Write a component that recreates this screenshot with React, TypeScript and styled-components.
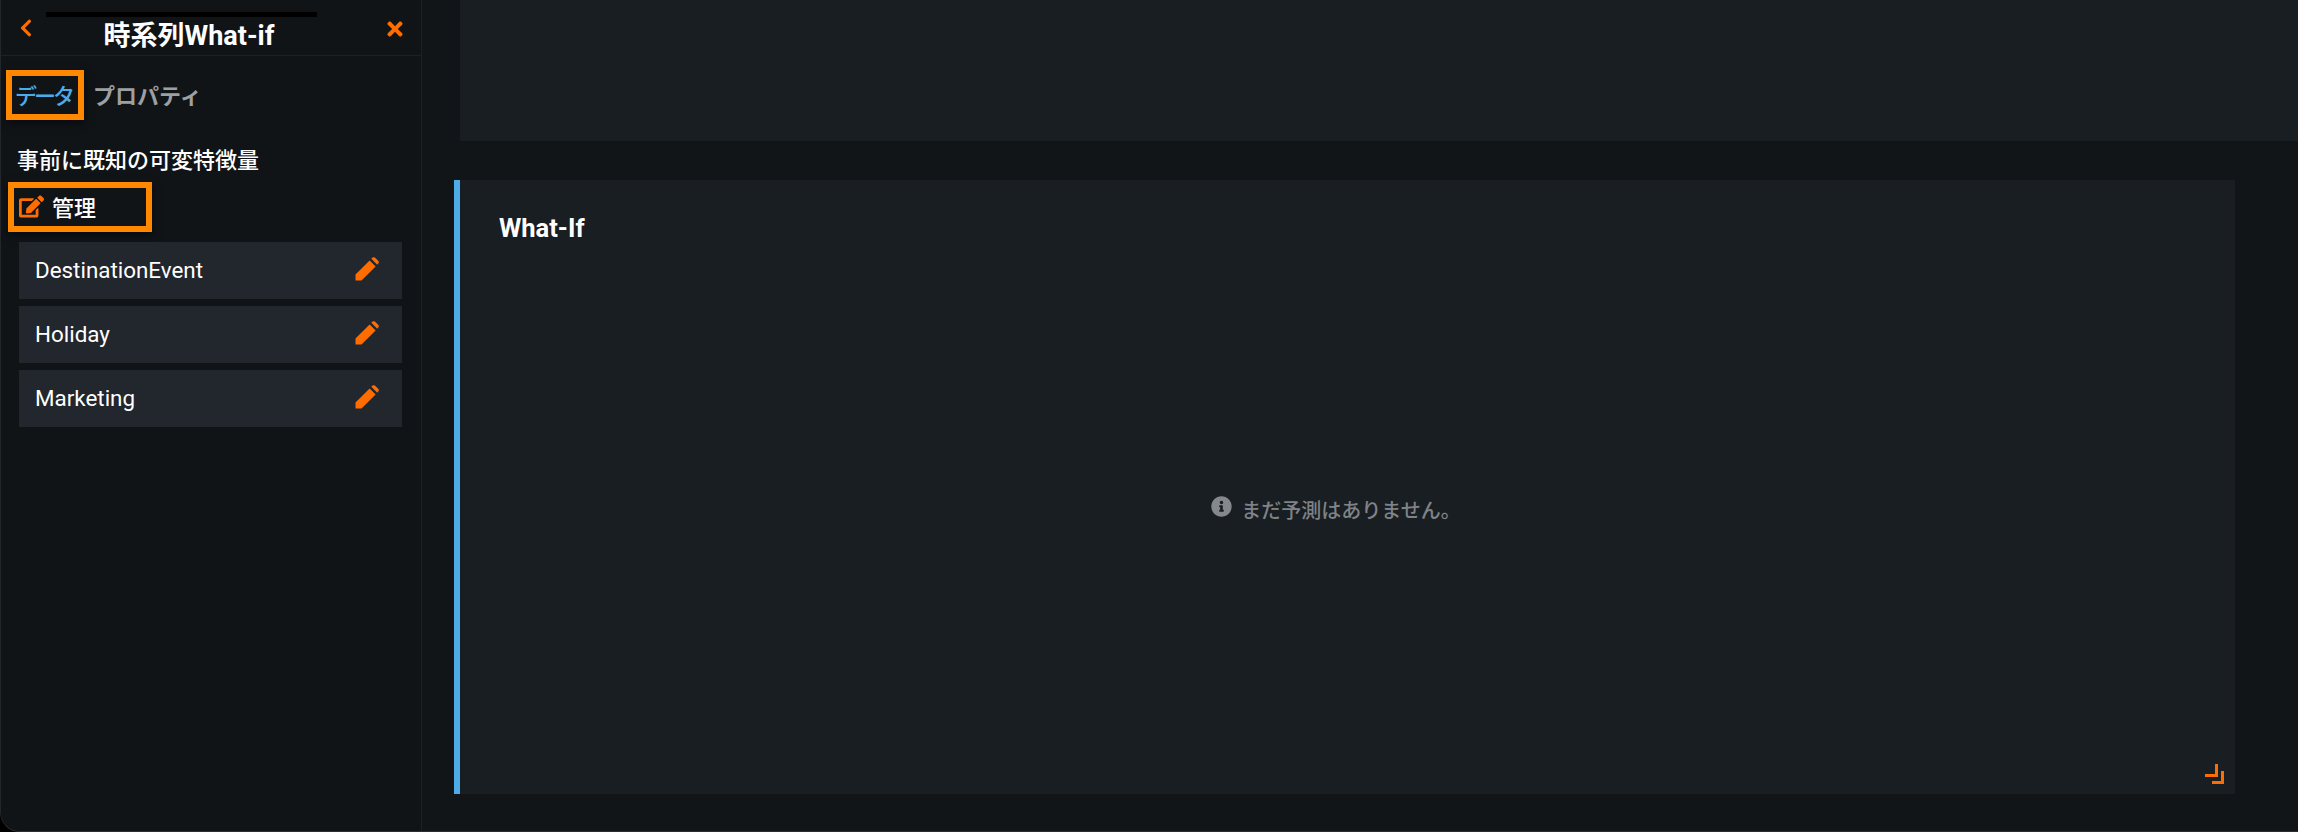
import React from "react";
import styled, { createGlobalStyle } from "styled-components";
import { FaChevronLeft, FaEdit, FaInfoCircle, FaTimes } from "react-icons/fa";

const ORANGE = "#ff6d00";
const HIGHLIGHT = "#ff8800";
const CJK_STACK = `Roboto, "Noto Sans CJK JP", sans-serif`;

const GlobalStyle = createGlobalStyle`
  html, body {
    margin: 0;
    padding: 0;
    height: 100%;
    background: #000;
  }
  #root {
    height: 100%;
  }
`;

const Frame = styled.div`
  display: flex;
  box-sizing: border-box;
  width: 2298px;
  height: 832px;
  overflow: hidden;
  background: #101417;
  border-left: 1px solid #23272b;
  border-bottom: 1px solid #2a2e32;
  border-bottom-left-radius: 20px;
  font-family: ${CJK_STACK};
  color: #fff;
`;

const Sidebar = styled.aside`
  flex: 0 0 421px;
  box-sizing: border-box;
  display: flex;
  flex-direction: column;
  border-right: 1px solid #1d2125;
  background: #101417;
`;

const SidebarHeader = styled.header`
  position: relative;
  box-sizing: border-box;
  height: 56px;
  flex: none;
  display: flex;
  align-items: flex-start;
  justify-content: space-between;
  padding: 18px 15px 0 15px;
  border-bottom: 1px solid #1d2125;
`;

const MaskBar = styled.div`
  position: absolute;
  top: 12px;
  left: 45px;
  width: 271px;
  height: 5px;
  background: #000;
`;

const Title = styled.h1`
  position: absolute;
  left: 0;
  right: 44px;
  top: 18px;
  margin: 0;
  text-align: center;
  font-size: 27px;
  line-height: 36px;
  font-weight: 700;
`;

const HeaderIcon = styled.span`
  display: flex;
  color: ${ORANGE};
  font-size: ${(p) => p.$size}px;
`;

const Tabs = styled.nav`
  display: flex;
  align-items: center;
  gap: 9px;
  padding: 14px 0 0 5px;
`;

const Tab = styled.div`
  box-sizing: border-box;
  height: 50px;
  display: flex;
  align-items: center;
  padding-bottom: 2px;
  font-size: 22px;
  font-weight: ${(p) => (p.$active ? 500 : 700)};
  letter-spacing: ${(p) => (p.$active ? "-3px" : "0")};
  padding-left: ${(p) => (p.$active ? 3 : 0)}px;
  padding-right: ${(p) => (p.$active ? 6 : 0)}px;
  color: ${(p) => (p.$active ? "#4dabe8" : "#9da0a3")};
  border: ${(p) => (p.$active ? `6px solid ${HIGHLIGHT}` : "none")};
  box-shadow: ${(p) => (p.$active ? "0 3px 8px rgba(0, 0, 0, 0.5)" : "none")};
`;

const SectionTitle = styled.div`
  padding: 25px 0 0 16px;
  font-size: 22px;
  line-height: 32px;
  font-weight: 500;
`;

const ManageButton = styled.div`
  box-sizing: border-box;
  width: 144px;
  height: 50px;
  margin: 5px 0 0 7px;
  display: flex;
  align-items: center;
  gap: 8px;
  padding: 0 0 2px 5px;
  border: 6px solid ${HIGHLIGHT};
  box-shadow: 0 3px 8px rgba(0, 0, 0, 0.5);
  font-size: 22px;
  font-weight: 500;
  svg {
    color: ${ORANGE};
    font-size: 25px;
    flex: none;
  }
`;

const FeatureList = styled.div`
  display: flex;
  flex-direction: column;
  gap: 7px;
  margin: 10px 0 0 18px;
  width: 383px;
`;

const FeatureRow = styled.div`
  box-sizing: border-box;
  height: 57px;
  display: flex;
  align-items: center;
  justify-content: space-between;
  padding: 0 23px 2px 16px;
  background: #22262d;
  font-size: 22.4px;
`;

const PencilIcon = styled.svg`
  width: 24px;
  height: 24px;
  margin-top: -2px;
  fill: ${ORANGE};
`;

const Main = styled.main`
  flex: 1;
  display: flex;
  flex-direction: column;
  gap: 39px;
  padding: 0 63px 37px 32px;
  background: #111518;
`;

const TopCard = styled.section`
  height: 141px;
  flex: none;
  margin: 0 -63px 0 6px;
  background: #191e22;
`;

const WhatIfCard = styled.section`
  position: relative;
  flex: 1;
  display: flex;
  flex-direction: column;
  border-left: 6px solid #4dabe8;
  background: #191e22;
`;

const CardTitle = styled.h2`
  margin: 0;
  padding: 30px 0 0 39px;
  font-size: 25.5px;
  line-height: 36px;
  font-weight: 700;
`;

const EmptyState = styled.div`
  flex: 1;
  display: flex;
  align-items: center;
  justify-content: center;
  gap: 9px;
  padding: 0 23px 22px 0;
  color: #7f8387;
  font-size: 20px;
  font-weight: 500;
  svg {
    font-size: 21px;
    color: #85898d;
    margin-top: -5px;
  }
`;

const ResizeHandle = styled.svg`
  position: absolute;
  right: 11px;
  bottom: 10px;
  width: 19px;
  height: 20px;
`;

const FEATURES = ["DestinationEvent", "Holiday", "Marketing"];

const App = () => {
  return (
    <>
      <GlobalStyle />
      <Frame>
        <Sidebar>
          <SidebarHeader>
            <HeaderIcon $size={20}>
              <FaChevronLeft />
            </HeaderIcon>
            <MaskBar />
            <Title>時系列What-if</Title>
            <HeaderIcon $size={22}>
              <FaTimes />
            </HeaderIcon>
          </SidebarHeader>
          <Tabs>
            <Tab $active>データ</Tab>
            <Tab>プロパティ</Tab>
          </Tabs>
          <SectionTitle>事前に既知の可変特徴量</SectionTitle>
          <ManageButton>
            <FaEdit />
            管理
          </ManageButton>
          <FeatureList>
            {FEATURES.map((name) => (
              <FeatureRow key={name}>
                {name}
                <PencilIcon viewBox="0 0 24 24">
                  <path d="M14.6 3.4L20.6 9.4L7 23Q6.5 23.5 5.5 23.5L0.5 23.5L0.5 18Q0.5 17.5 1 17Z" />
                  <path d="M16.3 1.7L17.5 0.6Q18.7 -0.3 19.9 0.6L23.4 4Q24.3 5.2 23.4 6.3L22.3 7.7Z" />
                </PencilIcon>
              </FeatureRow>
            ))}
          </FeatureList>
        </Sidebar>
        <Main>
          <TopCard />
          <WhatIfCard>
            <CardTitle>What-If</CardTitle>
            <EmptyState>
              <FaInfoCircle />
              まだ予測はありません。
            </EmptyState>
            <ResizeHandle viewBox="0 0 19 20" fill="none" stroke={ORANGE} strokeWidth="3">
              <path d="M0 11.5H11.5V0" />
              <path d="M7 18.5H17.5V7" />
            </ResizeHandle>
          </WhatIfCard>
        </Main>
      </Frame>
    </>
  );
};

export default App;
